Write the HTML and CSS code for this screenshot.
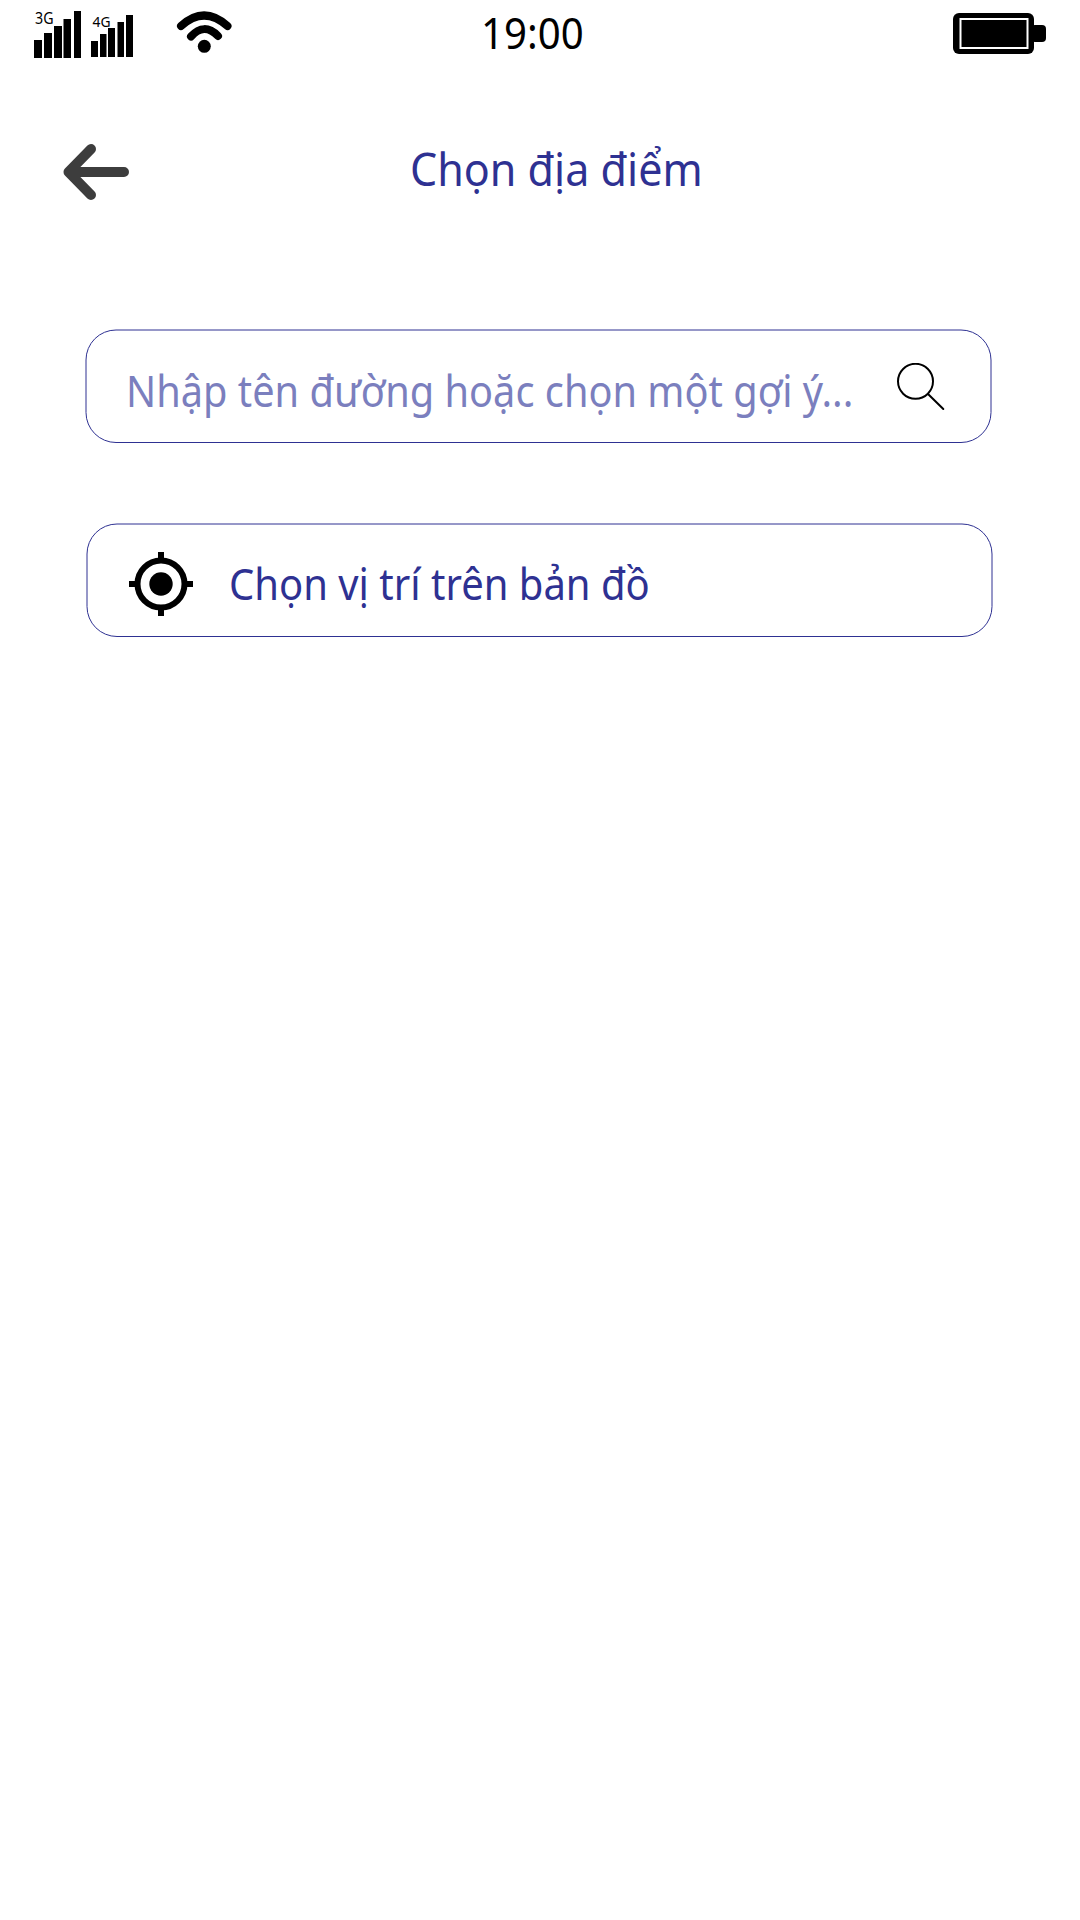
FILE: index.html
```html
<!DOCTYPE html>
<html lang="vi">
<head>
<meta charset="utf-8">
<title>Chọn địa điểm</title>
<link rel="stylesheet" href="styles.css">
</head>
<body>
<header class="status">
  <svg class="status-left" width="240" height="70" viewBox="20 0 240 70">
    <path d="M34 40h8v18h-8zM44 33h8v25h-8zM54 26h8v32h-8zM63.500 19h7.500v39h-7.500zM74 11h7v47h-7z"/>
    <path d="M91 41h7v16h-7zM100 34h6.500v23h-6.500zM108 28h7v29h-7zM117.500 22h6.500v35h-6.500zM126 15h7v42h-7z"/>
    <text class="network" x="35" y="24" font-size="15.500" textLength="18.500" lengthAdjust="spacingAndGlyphs">3G</text>
    <text class="network" x="92.500" y="26.800" font-size="15" textLength="18" lengthAdjust="spacingAndGlyphs">4G</text>
    <g class="waves"><path d="M181 26Q204 5 227.500 26"/><path d="M191 36.500Q204 22 218 36"/></g>
    <circle cx="204.300" cy="46.300" r="6.500"/>
  </svg>
  <time class="clock"><span class="fit">19:00</span></time>
  <svg class="battery" width="94" height="42" viewBox="0 0 94 42">
    <rect x="0" y="0" width="81" height="41" rx="6"/>
    <rect x="78" y="12" width="15" height="17" rx="4"/>
    <rect class="cell" x="7.500" y="6" width="67" height="29"/>
  </svg>
</header>
<nav class="topbar">
  <svg class="back" width="70" height="58" viewBox="0 0 70 58"><path d="M64 29H9M31 6L8.500 29L31 52" /></svg>
  <h1 class="title"><span class="fit">Chọn địa điểm</span></h1>
</nav>
<main class="content">
  <div class="card">
    <svg class="frame" width="908" height="115"><rect x="1" y="1" width="905" height="112.500" rx="30"/></svg>
    <div class="row search">
      <span class="hint"><span class="fit">Nhập tên đường hoặc chọn một gợi ý...</span></span>
      <svg class="glass" width="50" height="50" viewBox="0 0 50 50"><circle cx="18.500" cy="18.300" r="17.500"/><path d="M31 31L46.300 46"/></svg>
    </div>
  </div>
  <div class="card card-map">
    <svg class="frame" width="908" height="115"><rect x="1" y="1" width="905" height="112.500" rx="30"/></svg>
    <div class="row pick">
      <svg class="target" width="64" height="64" viewBox="0 0 64 64"><circle class="ring" cx="32" cy="32" r="23.500"/><circle cx="32" cy="32" r="11.700"/><path d="M29 0h6v7h-6zM29 57h6v7h-6zM0 29h7v6H0zM57 29h7v6h-7z"/></svg>
      <span class="label"><span class="fit">Chọn vị trí trên bản đồ</span></span>
    </div>
  </div>
</main>
</body>
</html>
```
FILE: styles.css
```css
* { box-sizing: border-box; }
body { margin: 0; width: 1080px; height: 1920px; background: #fff; color: #000; font-family: "Noto Sans", sans-serif; overflow: hidden; }
svg { display: block; flex: none; }
.fit { display: inline-block; white-space: nowrap; transform-origin: 0 50%; }
.status { display: flex; height: 70px; padding-left: 20px; }
.network { font-family: "Noto Sans", sans-serif; }
.waves { fill: none; stroke: #000; stroke-width: 8; stroke-linecap: round; }
.clock { width: 141px; margin-left: 221px; padding-top: 3px; font-size: 43px; line-height: 60px; }
.clock .fit { transform: scaleX(.935); }
.battery { margin: 13px 0 0 331px; }
.cell { stroke: #fff; stroke-width: 2; }
.topbar { display: flex; height: 140px; margin-top: 60px; padding-left: 60px; }
.back { margin-top: 13px; fill: none; stroke: #3d3d3d; stroke-width: 10; stroke-linecap: round; stroke-linejoin: round; }
.title { margin: 9px 0 0 280px; color: #2e3192; font-size: 45px; font-weight: 400; line-height: 60px; }
.title .fit { transform: scaleX(.956); }
.content { display: flex; flex-direction: column; gap: 79px; padding: 59px 0 0 85px; }
.card { display: grid; width: 908px; height: 115px; }
.card-map { margin-left: 1px; }
.frame, .row { grid-area: 1 / 1; }
.frame rect { fill: none; stroke: #2e3192; stroke-width: 1; }
.row { display: flex; }
.hint { width: 768px; padding: 32px 0 0 41px; color: #7b7fbe; font-size: 43px; line-height: 60px; }
.hint .fit { transform: scaleX(.924); }
.glass { margin: 34px 0 0 44px; fill: none; stroke: #000; stroke-width: 2; stroke-linecap: round; }
.target { margin: 29px 0 0 43px; }
.ring { fill: none; stroke: #000; stroke-width: 6; }
.label { margin: 31px 0 0 36px; color: #2e3192; font-size: 43px; line-height: 60px; }
.label .fit { transform: scaleX(.93); }
```
